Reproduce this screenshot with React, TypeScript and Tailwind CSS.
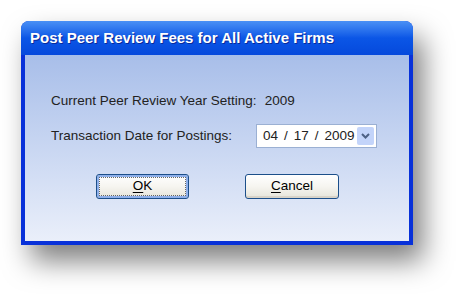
const body = '"Liberation Sans", Arial, sans-serif';

function XpButton({ label, hot, isDefault }: { label: string; hot: string; isDefault?: boolean }) {
  const rest = label.slice(1);
  return (
    <button
      className={`block h-[25px] w-full rounded-[3px] border border-[#1c4f8a] p-[2px] bg-gradient-to-b from-[#ffffff] via-[#f6f5f0] to-[#e6e4da] ${
        isDefault ? 'shadow-[inset_0_0_0_2px_#8fb0ea]' : 'shadow-[inset_0_-2px_0_#d8d3c8]'
      }`}
    >
      <span
        className={`flex h-full w-full items-center justify-center text-[13.5px] text-black ${
          isDefault ? 'border border-dotted border-[#666]' : ''
        }`}
        style={{ fontFamily: body }}
      >
        <span className="underline underline-offset-2">{hot}</span>
        {rest}
      </span>
    </button>
  );
}

export default function App() {
  return (
    <div className="h-[299px] w-[468px] bg-white pl-[21px] pt-[21px]">
      <div className="flex h-[224px] w-[392px] flex-col rounded-t-[8px] bg-[#0831d9] shadow-[10px_16px_28px_rgba(0,0,0,0.5)]">
        {/* title bar */}
        <div className="flex h-[34px] items-center rounded-t-[8px] bg-gradient-to-b from-[#4a90f5] via-[#0b56e6] to-[#0649dc] pl-[9px] pt-[1px]">
          <span
            className="text-[15px] font-bold text-white [text-shadow:1px_1px_0_#0a2a9a]"
            style={{ fontFamily: body }}
          >
            Post Peer Review Fees for All Active Firms
          </span>
        </div>

        {/* client area */}
        <div
          className="mx-[4px] mb-[4px] flex flex-1 flex-col bg-gradient-to-b from-[#a8bee9] to-[#eaeffa] pl-[26px] text-[13.5px] text-[#222]"
          style={{ fontFamily: body }}
        >
          <div className="mt-[38px] flex h-[16px] items-center">
            <span>Current Peer Review Year Setting:</span>
            <span className="ml-[8px]">2009</span>
          </div>

          <div className="mt-[15px] flex h-[24px] items-center">
            <span className="w-[205px]">Transaction Date for Postings:</span>
            <div className="flex h-[24px] w-[121px] items-center border border-[#9bb0d3] bg-white pl-[6px] pr-[2px]">
              <span className="flex flex-1 items-center gap-[6px]">
                <span>04</span>
                <span>/</span>
                <span>17</span>
                <span>/</span>
                <span>2009</span>
              </span>
              <span className="flex h-[18px] w-[17px] items-center justify-center rounded-[2px] bg-[#c3d4fa]">
                <svg width="9" height="6" viewBox="0 0 9 6">
                  <path d="M1 1l3.5 3.5L8 1" fill="none" stroke="#4d6185" strokeWidth="2" />
                </svg>
              </span>
            </div>
          </div>

          <div className="mt-[26px] flex">
            <div className="ml-[45px] w-[93px]">
              <XpButton label="OK" hot="O" isDefault />
            </div>
            <div className="ml-[56px] w-[94px]">
              <XpButton label="Cancel" hot="C" />
            </div>
          </div>
        </div>
      </div>
    </div>
  );
}
